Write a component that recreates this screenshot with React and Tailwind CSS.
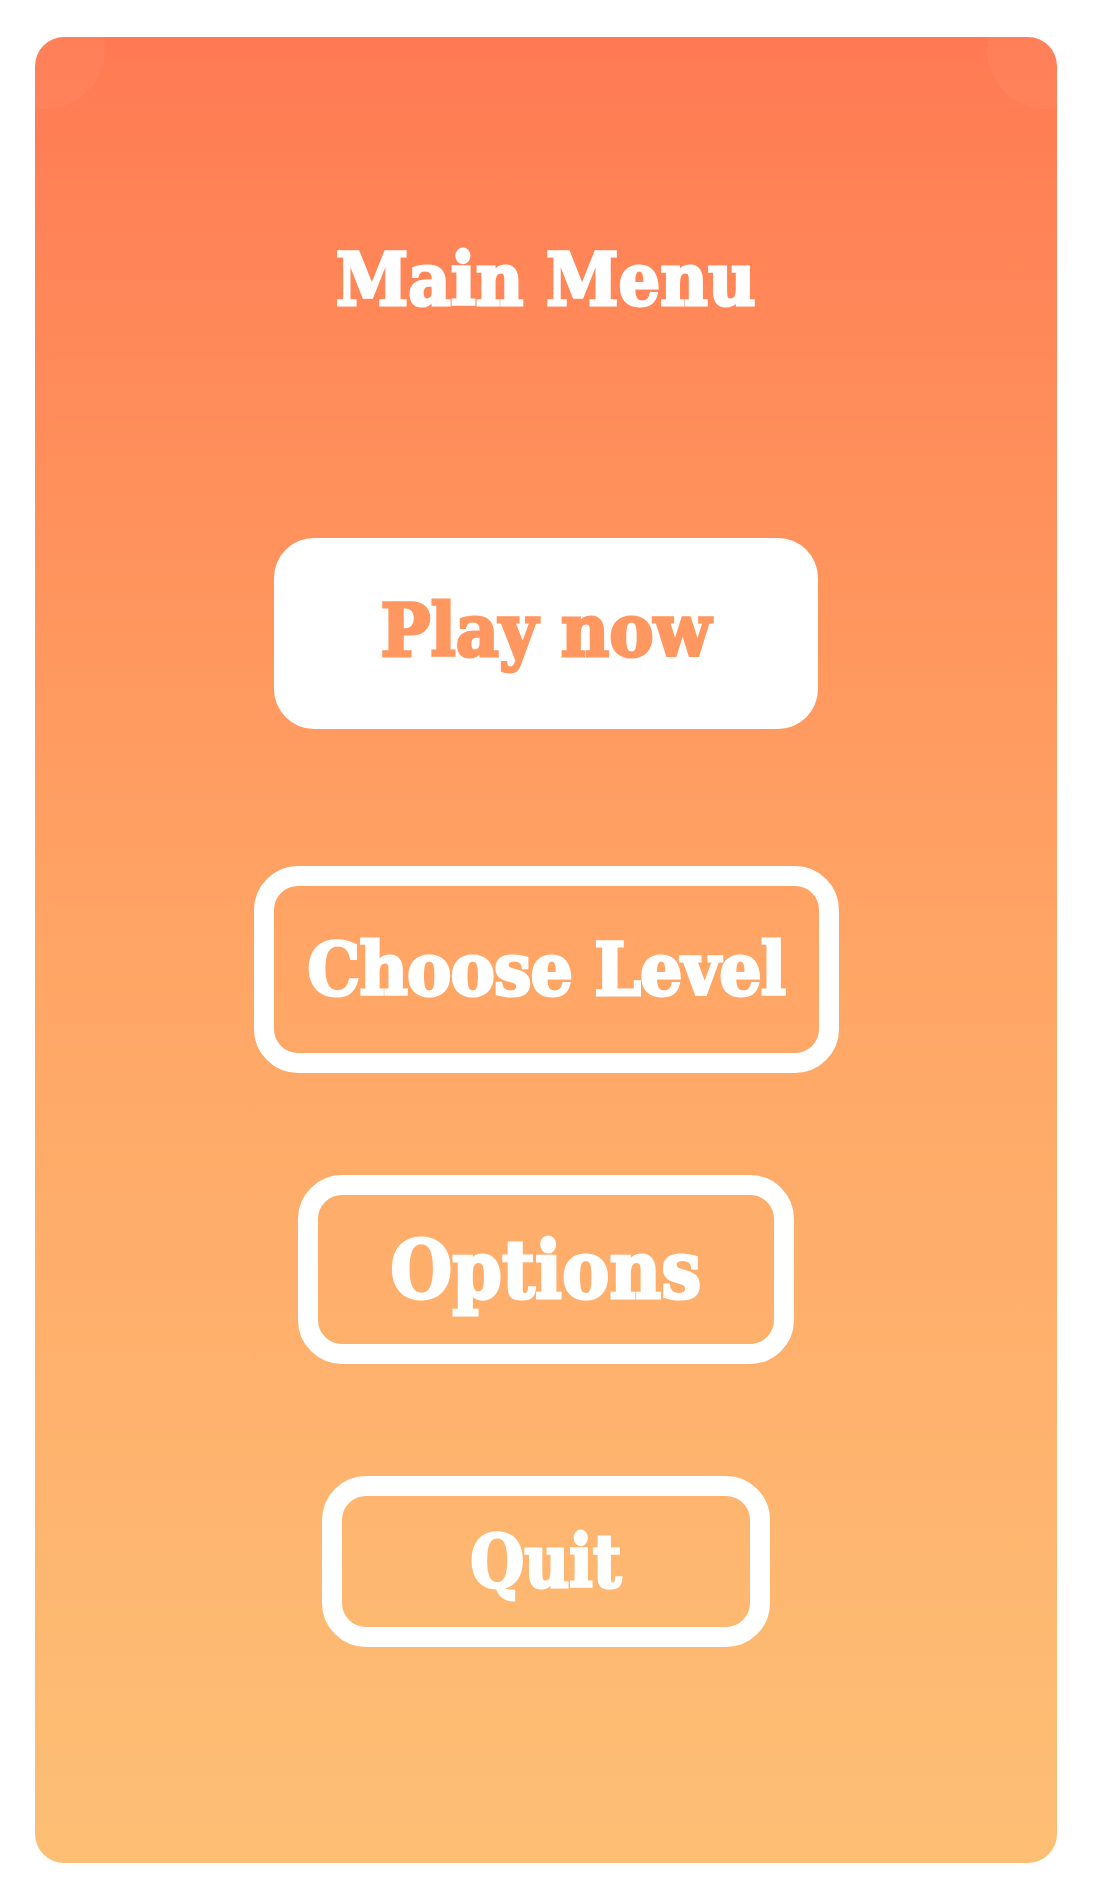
import React from "react";

const slab = { fontFamily: '"DejaVu Serif", "Liberation Serif", serif' };

function MenuButton({ label, solid, className, textClass }) {
  return (
    <button
      className={
        "flex items-center justify-center box-border " +
        (solid ? "bg-white rounded-[40px] " : "border-[20px] border-white rounded-[44px] ") +
        className
      }
    >
      <span
        className={
          "inline-block font-bold leading-none whitespace-nowrap [-webkit-text-stroke:3px_currentcolor] " +
          textClass
        }
        style={slab}
      >
        {label}
      </span>
    </button>
  );
}

export default function App() {
  return (
    <div className="bg-white min-h-[1902px] w-[1098px] pt-[37px]">
      <div className="relative overflow-hidden ml-[35px] w-[1022px] h-[1826px] rounded-[29px] bg-gradient-to-b from-[#ff7a53] via-[#ffa565] to-[#fdbf75] flex flex-col items-center">
        <div className="absolute -left-[50px] -top-[48px] w-[120px] h-[120px] rounded-full bg-white/[0.04]" />
        <div className="absolute -right-[50px] -top-[48px] w-[120px] h-[120px] rounded-full bg-white/[0.04]" />

        <h1
          className="inline-block mt-[207px] text-white font-bold text-[72px] leading-none scale-x-[0.91] [-webkit-text-stroke:3px_currentcolor]"
          style={slab}
        >
          Main Menu
        </h1>

        <MenuButton
          solid
          label="Play now"
          className="mt-[222px] w-[544px] h-[191px] pb-[6px]"
          textClass="text-[#ff9760] text-[72px] scale-x-[0.925]"
        />
        <MenuButton
          label="Choose Level"
          className="mt-[137px] w-[585px] h-[207px]"
          textClass="text-white text-[72px] tracking-[-1px] scale-x-[0.925]"
        />
        <MenuButton
          label="Options"
          className="mt-[102px] w-[496px] h-[189px]"
          textClass="text-white text-[80px] scale-x-[0.89]"
        />
        <MenuButton
          label="Quit"
          className="mt-[112px] w-[448px] h-[171px]"
          textClass="text-white text-[72px] scale-x-[0.86]"
        />
      </div>
    </div>
  );
}
